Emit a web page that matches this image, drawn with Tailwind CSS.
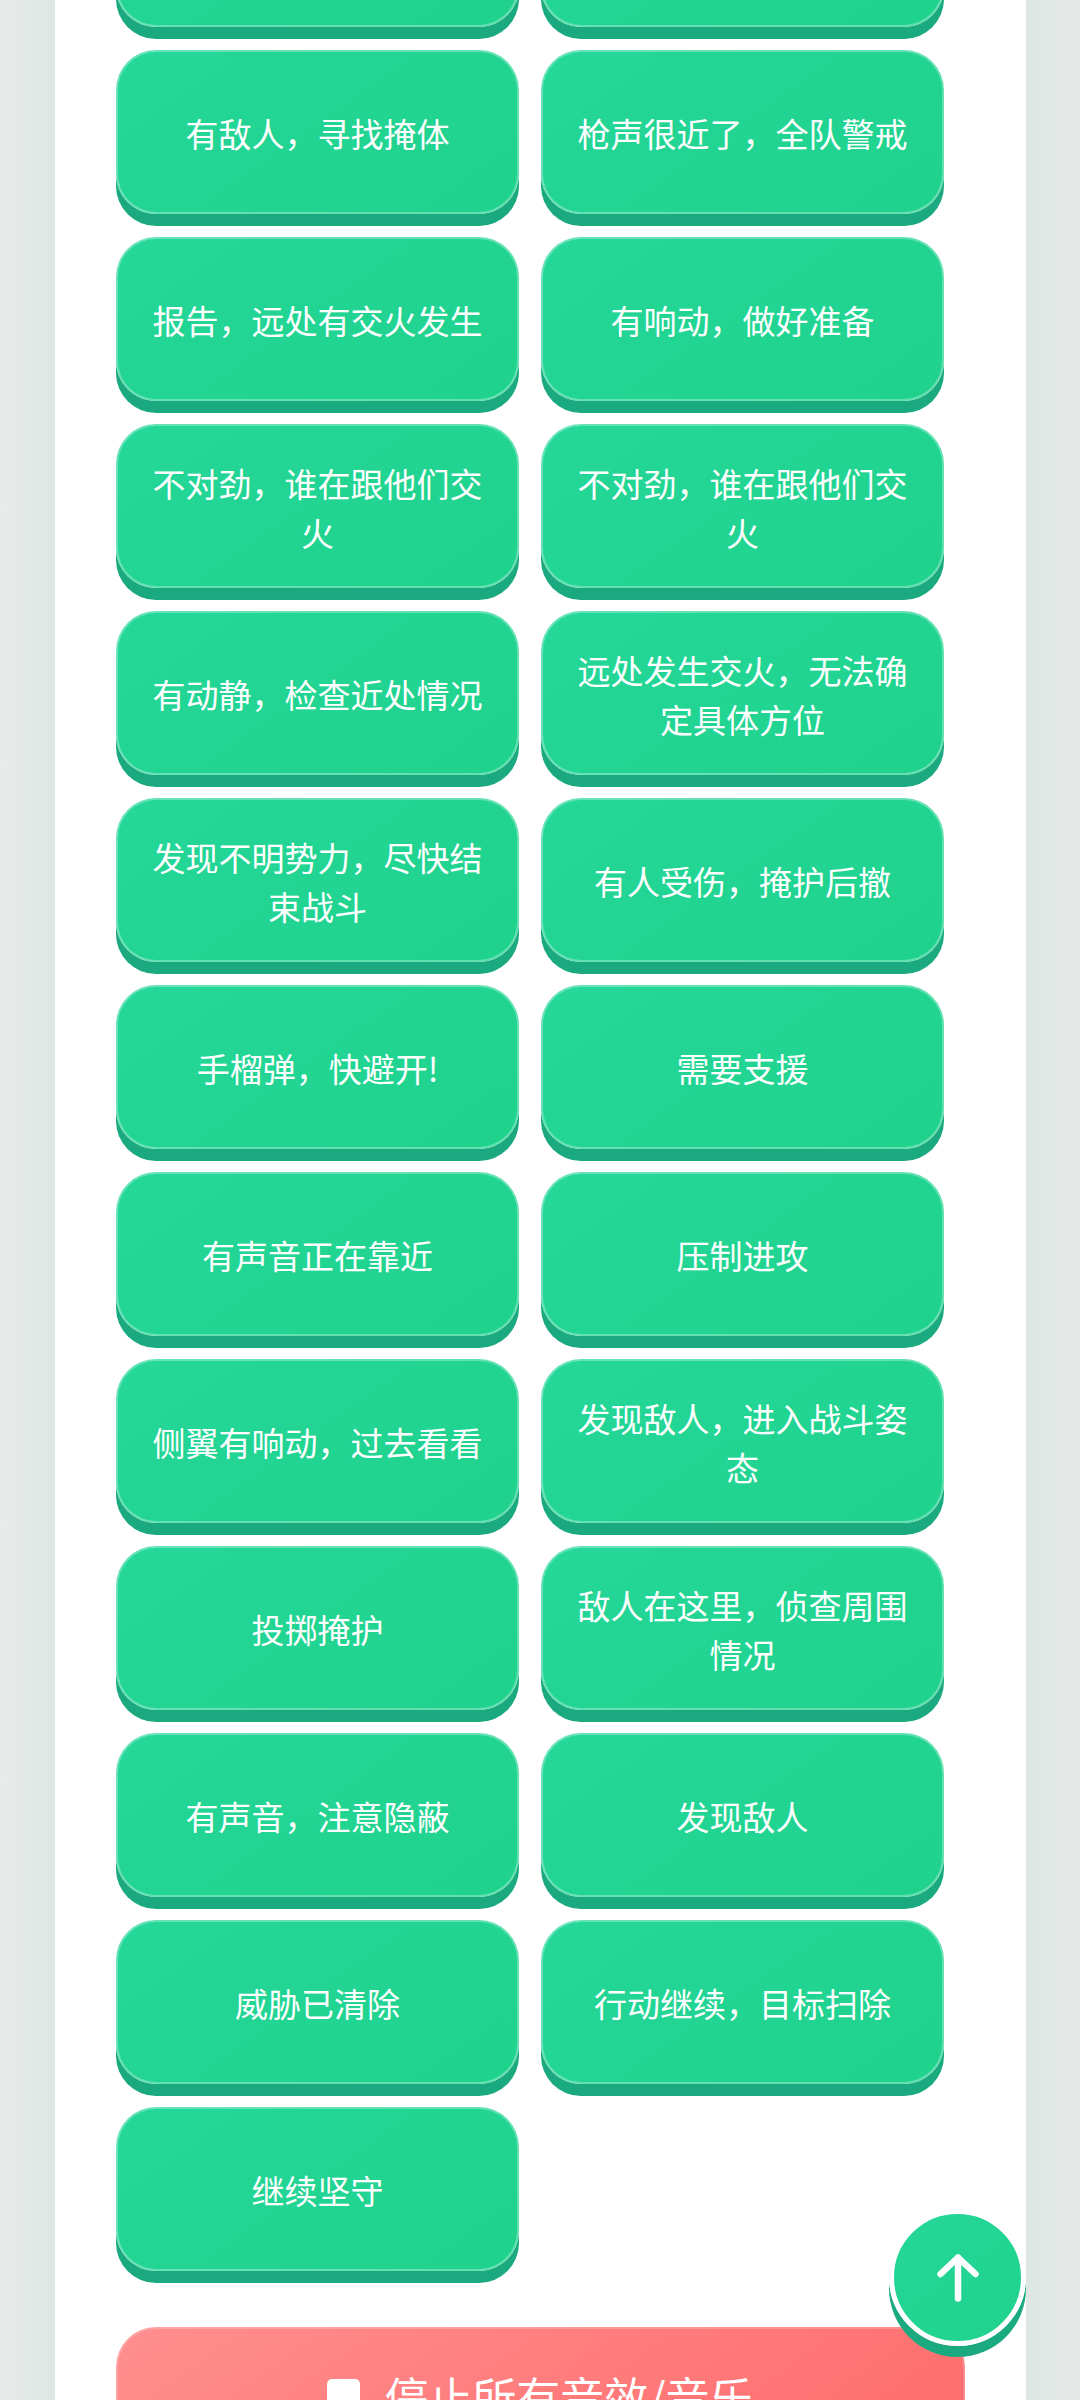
<!DOCTYPE html>
<html lang="zh-CN">
  <head>
    <meta charset="UTF-8" />
    <meta name="viewport" content="width=device-width, initial-scale=1.0" />
    <title>语音按钮</title>
    <script src="https://cdn.jsdelivr.net/npm/@tailwindcss/browser@4"></script>
  </head>
  <body class="h-[2400px] overflow-hidden bg-[linear-gradient(90deg,#e9ebea,#dde7e3_5%,#dde7e3_95%,#e7e9e8)] pl-[55px] pr-[54px] font-['Noto_Sans_CJK_SC','Noto_Sans',sans-serif] text-white">
    <div class="-mt-[137px] bg-white pl-[61px] pr-[61px] pb-[100px]">
      <!-- 语音按钮 -->
      <div class="grid grid-cols-2 gap-x-[22px] gap-y-[23px] pr-[21px] text-center text-[33px] leading-[49px]">
        <button class="h-[164px] rounded-[40px] border-2 border-white/30 bg-[linear-gradient(145deg,#25d799,#1fd28c)] bg-origin-border px-[33px] pt-[3px] shadow-[0_12px_0_#1ba97f]"></button>
        <button class="h-[164px] rounded-[40px] border-2 border-white/30 bg-[linear-gradient(145deg,#25d799,#1fd28c)] bg-origin-border px-[33px] pt-[3px] shadow-[0_12px_0_#1ba97f]"></button>
        <button class="h-[164px] rounded-[40px] border-2 border-white/30 bg-[linear-gradient(145deg,#25d799,#1fd28c)] bg-origin-border px-[33px] pt-[3px] shadow-[0_12px_0_#1ba97f]">有敌人，寻找掩体</button>
        <button class="h-[164px] rounded-[40px] border-2 border-white/30 bg-[linear-gradient(145deg,#25d799,#1fd28c)] bg-origin-border px-[33px] pt-[3px] shadow-[0_12px_0_#1ba97f]">枪声很近了，全队警戒</button>
        <button class="h-[164px] rounded-[40px] border-2 border-white/30 bg-[linear-gradient(145deg,#25d799,#1fd28c)] bg-origin-border px-[33px] pt-[3px] shadow-[0_12px_0_#1ba97f]">报告，远处有交火发生</button>
        <button class="h-[164px] rounded-[40px] border-2 border-white/30 bg-[linear-gradient(145deg,#25d799,#1fd28c)] bg-origin-border px-[33px] pt-[3px] shadow-[0_12px_0_#1ba97f]">有响动，做好准备</button>
        <button class="h-[164px] rounded-[40px] border-2 border-white/30 bg-[linear-gradient(145deg,#25d799,#1fd28c)] bg-origin-border px-[33px] pt-[3px] shadow-[0_12px_0_#1ba97f]">不对劲，谁在跟他们交火</button>
        <button class="h-[164px] rounded-[40px] border-2 border-white/30 bg-[linear-gradient(145deg,#25d799,#1fd28c)] bg-origin-border px-[33px] pt-[3px] shadow-[0_12px_0_#1ba97f]">不对劲，谁在跟他们交火</button>
        <button class="h-[164px] rounded-[40px] border-2 border-white/30 bg-[linear-gradient(145deg,#25d799,#1fd28c)] bg-origin-border px-[33px] pt-[3px] shadow-[0_12px_0_#1ba97f]">有动静，检查近处情况</button>
        <button class="h-[164px] rounded-[40px] border-2 border-white/30 bg-[linear-gradient(145deg,#25d799,#1fd28c)] bg-origin-border px-[33px] pt-[3px] shadow-[0_12px_0_#1ba97f]">远处发生交火，无法确定具体方位</button>
        <button class="h-[164px] rounded-[40px] border-2 border-white/30 bg-[linear-gradient(145deg,#25d799,#1fd28c)] bg-origin-border px-[33px] pt-[3px] shadow-[0_12px_0_#1ba97f]">发现不明势力，尽快结束战斗</button>
        <button class="h-[164px] rounded-[40px] border-2 border-white/30 bg-[linear-gradient(145deg,#25d799,#1fd28c)] bg-origin-border px-[33px] pt-[3px] shadow-[0_12px_0_#1ba97f]">有人受伤，掩护后撤</button>
        <button class="h-[164px] rounded-[40px] border-2 border-white/30 bg-[linear-gradient(145deg,#25d799,#1fd28c)] bg-origin-border px-[33px] pt-[3px] shadow-[0_12px_0_#1ba97f]">手榴弹，快避开!</button>
        <button class="h-[164px] rounded-[40px] border-2 border-white/30 bg-[linear-gradient(145deg,#25d799,#1fd28c)] bg-origin-border px-[33px] pt-[3px] shadow-[0_12px_0_#1ba97f]">需要支援</button>
        <button class="h-[164px] rounded-[40px] border-2 border-white/30 bg-[linear-gradient(145deg,#25d799,#1fd28c)] bg-origin-border px-[33px] pt-[3px] shadow-[0_12px_0_#1ba97f]">有声音正在靠近</button>
        <button class="h-[164px] rounded-[40px] border-2 border-white/30 bg-[linear-gradient(145deg,#25d799,#1fd28c)] bg-origin-border px-[33px] pt-[3px] shadow-[0_12px_0_#1ba97f]">压制进攻</button>
        <button class="h-[164px] rounded-[40px] border-2 border-white/30 bg-[linear-gradient(145deg,#25d799,#1fd28c)] bg-origin-border px-[33px] pt-[3px] shadow-[0_12px_0_#1ba97f]">侧翼有响动，过去看看</button>
        <button class="h-[164px] rounded-[40px] border-2 border-white/30 bg-[linear-gradient(145deg,#25d799,#1fd28c)] bg-origin-border px-[33px] pt-[3px] shadow-[0_12px_0_#1ba97f]">发现敌人，进入战斗姿态</button>
        <button class="h-[164px] rounded-[40px] border-2 border-white/30 bg-[linear-gradient(145deg,#25d799,#1fd28c)] bg-origin-border px-[33px] pt-[3px] shadow-[0_12px_0_#1ba97f]">投掷掩护</button>
        <button class="h-[164px] rounded-[40px] border-2 border-white/30 bg-[linear-gradient(145deg,#25d799,#1fd28c)] bg-origin-border px-[33px] pt-[3px] shadow-[0_12px_0_#1ba97f]">敌人在这里，侦查周围情况</button>
        <button class="h-[164px] rounded-[40px] border-2 border-white/30 bg-[linear-gradient(145deg,#25d799,#1fd28c)] bg-origin-border px-[33px] pt-[3px] shadow-[0_12px_0_#1ba97f]">有声音，注意隐蔽</button>
        <button class="h-[164px] rounded-[40px] border-2 border-white/30 bg-[linear-gradient(145deg,#25d799,#1fd28c)] bg-origin-border px-[33px] pt-[3px] shadow-[0_12px_0_#1ba97f]">发现敌人</button>
        <button class="h-[164px] rounded-[40px] border-2 border-white/30 bg-[linear-gradient(145deg,#25d799,#1fd28c)] bg-origin-border px-[33px] pt-[3px] shadow-[0_12px_0_#1ba97f]">威胁已清除</button>
        <button class="h-[164px] rounded-[40px] border-2 border-white/30 bg-[linear-gradient(145deg,#25d799,#1fd28c)] bg-origin-border px-[33px] pt-[3px] shadow-[0_12px_0_#1ba97f]">行动继续，目标扫除</button>
        <button class="h-[164px] rounded-[40px] border-2 border-white/30 bg-[linear-gradient(145deg,#25d799,#1fd28c)] bg-origin-border px-[33px] pt-[3px] shadow-[0_12px_0_#1ba97f]">继续坚守</button>
      </div>
      <!-- 停止按钮 -->
      <button class="mt-[56px] flex h-[137px] w-full items-center justify-center gap-[24px] rounded-[40px] border-2 border-white/20 bg-[linear-gradient(145deg,#ff8e8e,#ff6b6b)] bg-origin-border text-[44px] leading-[66px]">
        <span class="h-[33px] w-[33px] rounded-[5px] bg-white"></span>
        <span>停止所有音效/音乐</span>
      </button>
    </div>
    <!-- 回到顶部 -->
    <button class="fixed right-[54px] bottom-[54px] flex h-[137px] w-[137px] items-center justify-center rounded-full border-[5px] border-white bg-[linear-gradient(145deg,#25d799,#1fd28c)] bg-origin-border shadow-[0_11px_0_#1ba97f]">
      <svg width="42" height="48" viewBox="0 0 42 48" fill="none" stroke="white" stroke-width="6.5" stroke-linecap="round" stroke-linejoin="round">
        <path d="M21 44.5V3.5M3.5 20 21 3.5 38.5 20" />
      </svg>
    </button>
  </body>
</html>
